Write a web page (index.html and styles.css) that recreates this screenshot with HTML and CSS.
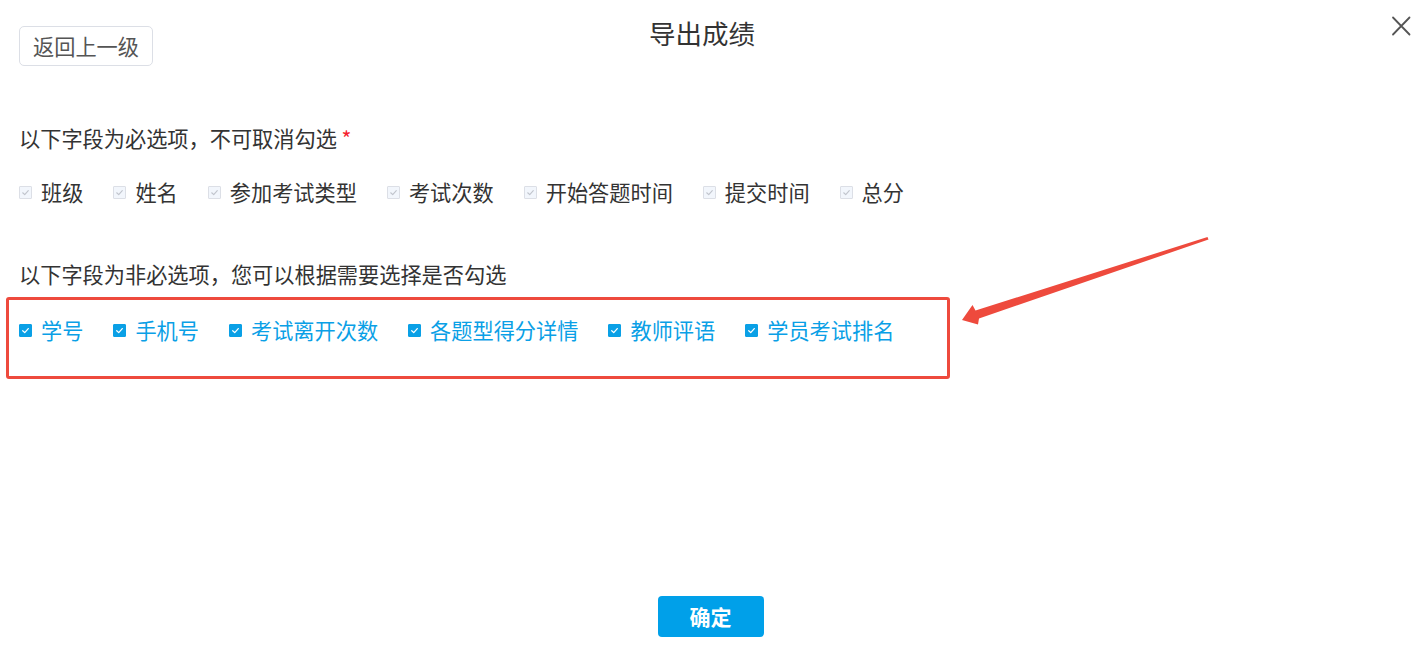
FILE: index.html
```html
<!DOCTYPE html>
<html lang="zh-CN">
<head>
<meta charset="utf-8">
<title>导出成绩</title>
<link rel="stylesheet" href="styles.css">
</head>
<body>
<div class="dialog">
  <header class="head">
    <div class="head-left"><button class="back-btn" type="button">返回上一级</button></div>
    <h1 class="title">导出成绩</h1>
    <div class="head-right"></div>
    <button class="close-btn" type="button" aria-label="关闭">
      <svg width="20" height="20" viewBox="0 0 20 20"><path d="M2 1.5 L18.5 18.5 M18.5 1.5 L2 18.5" stroke="#555" stroke-width="1.8" fill="none" stroke-linecap="round"/></svg>
    </button>
  </header>

  <section class="group">
    <p class="group-label">以下字段为必选项，不可取消勾选 <span class="req">*</span></p>
    <div class="checks">
      <label class="item disabled"><span class="cb"><svg viewBox="0 0 13 13"><path d="M3.2 6.8 L5.6 9 L9.8 4.2"/></svg></span>班级</label>
      <label class="item disabled"><span class="cb"><svg viewBox="0 0 13 13"><path d="M3.2 6.8 L5.6 9 L9.8 4.2"/></svg></span>姓名</label>
      <label class="item disabled"><span class="cb"><svg viewBox="0 0 13 13"><path d="M3.2 6.8 L5.6 9 L9.8 4.2"/></svg></span>参加考试类型</label>
      <label class="item disabled"><span class="cb"><svg viewBox="0 0 13 13"><path d="M3.2 6.8 L5.6 9 L9.8 4.2"/></svg></span>考试次数</label>
      <label class="item disabled"><span class="cb"><svg viewBox="0 0 13 13"><path d="M3.2 6.8 L5.6 9 L9.8 4.2"/></svg></span>开始答题时间</label>
      <label class="item disabled"><span class="cb"><svg viewBox="0 0 13 13"><path d="M3.2 6.8 L5.6 9 L9.8 4.2"/></svg></span>提交时间</label>
      <label class="item disabled"><span class="cb"><svg viewBox="0 0 13 13"><path d="M3.2 6.8 L5.6 9 L9.8 4.2"/></svg></span>总分</label>
    </div>
  </section>

  <section class="group group-optional">
    <p class="group-label">以下字段为非必选项，您可以根据需要选择是否勾选</p>
    <div class="highlight">
      <div class="checks">
        <label class="item checked"><span class="cb"><svg viewBox="0 0 13 13"><path d="M3.2 6.8 L5.6 9 L9.8 4.2"/></svg></span>学号</label>
        <label class="item checked"><span class="cb"><svg viewBox="0 0 13 13"><path d="M3.2 6.8 L5.6 9 L9.8 4.2"/></svg></span>手机号</label>
        <label class="item checked"><span class="cb"><svg viewBox="0 0 13 13"><path d="M3.2 6.8 L5.6 9 L9.8 4.2"/></svg></span>考试离开次数</label>
        <label class="item checked"><span class="cb"><svg viewBox="0 0 13 13"><path d="M3.2 6.8 L5.6 9 L9.8 4.2"/></svg></span>各题型得分详情</label>
        <label class="item checked"><span class="cb"><svg viewBox="0 0 13 13"><path d="M3.2 6.8 L5.6 9 L9.8 4.2"/></svg></span>教师评语</label>
        <label class="item checked"><span class="cb"><svg viewBox="0 0 13 13"><path d="M3.2 6.8 L5.6 9 L9.8 4.2"/></svg></span>学员考试排名</label>
      </div>
    </div>
  </section>

  <footer class="foot">
    <button class="ok-btn" type="button">确定</button>
  </footer>

  <svg class="arrow" width="1425" height="672" viewBox="0 0 1425 672">
    <polygon points="962,320 972.5,305 975.5,310.5 1207.5,237 1208.5,239.5 979,318.5 978,324.5" fill="#ee4a3d"/>
  </svg>
</div>
</body>
</html>
```

FILE: styles.css
```css
* { box-sizing: border-box; }

html, body {
  margin: 0;
  padding: 0;
  background: #fff;
}

body {
  font-family: "Noto Sans CJK SC", "Noto Sans", "Liberation Sans", sans-serif;
  color: #333;
  width: 1425px;
  height: 672px;
  overflow: hidden;
}

.dialog {
  position: relative;
  width: 1425px;
  height: 672px;
  padding-left: 19px;
}

.head {
  display: grid;
  grid-template-columns: 1fr auto 1fr;
  align-items: start;
  margin-left: -19px;
  padding-left: 19px;
}

.back-btn {
  margin-top: 26px;
  height: 40px;
  padding: 0 13px;
  border: 1px solid #dcdfe6;
  border-radius: 5px;
  background: #fff;
  color: #555;
  font-family: inherit;
  font-size: 21.2px;
  line-height: 38px;
  cursor: pointer;
}

.title {
  margin: 18px 40px 0 0;
  font-size: 26.5px;
  font-weight: normal;
  line-height: 30px;
  color: #333;
}

.close-btn {
  position: absolute;
  top: 16px;
  right: 14px;
  width: 20px;
  height: 20px;
  padding: 0;
  border: 0;
  background: none;
  cursor: pointer;
}
.close-btn svg { display: block; }

.group-label {
  margin: 0;
  font-size: 21.2px;
  line-height: 30px;
  color: #333;
}

.group { margin-top: 57px; }
.group-optional { margin-top: 52px; }

.req { color: #f5222d; }

.checks {
  display: flex;
  gap: 30px;
  margin-top: 24px;
  font-size: 21.2px;
  line-height: 30px;
}

.item {
  display: flex;
  align-items: center;
  gap: 9px;
  white-space: nowrap;
}

.cb {
  width: 13px;
  height: 13px;
  border: 1px solid #dcdfe6;
  border-radius: 1px;
  background: #f2f6fc;
  display: block;
  flex: none;
}
.cb svg {
  display: block;
  width: 11px;
  height: 11px;
}
.cb path {
  fill: none;
  stroke: #c0c4cc;
  stroke-width: 1.3;
  stroke-linecap: round;
  stroke-linejoin: round;
}

.item.checked { color: #0aa0e6; }
.item.checked .cb {
  background: #0aa0e6;
  border-color: #0aa0e6;
}
.item.checked .cb path { stroke: #fff; stroke-width: 1.5; }

.highlight {
  margin-top: 8px;
  margin-left: -13px;
  width: 944px;
  height: 82px;
  border: 3px solid #ee4a3d;
  border-radius: 3px;
  padding: 15px 10px 0;
}
.highlight .checks { margin-top: 0; }

.foot {
  display: flex;
  justify-content: center;
  margin-left: -19px;
  margin-top: 217px;
}

.ok-btn {
  width: 106px;
  height: 41px;
  border: 0;
  border-radius: 4px;
  background: #00a0e9;
  color: #fff;
  font-family: inherit;
  font-size: 21px;
  font-weight: 700;
  line-height: 41px;
  padding: 0;
  margin-left: -4px;
  cursor: pointer;
}

.arrow {
  position: absolute;
  left: 0;
  top: 0;
  pointer-events: none;
}
```
